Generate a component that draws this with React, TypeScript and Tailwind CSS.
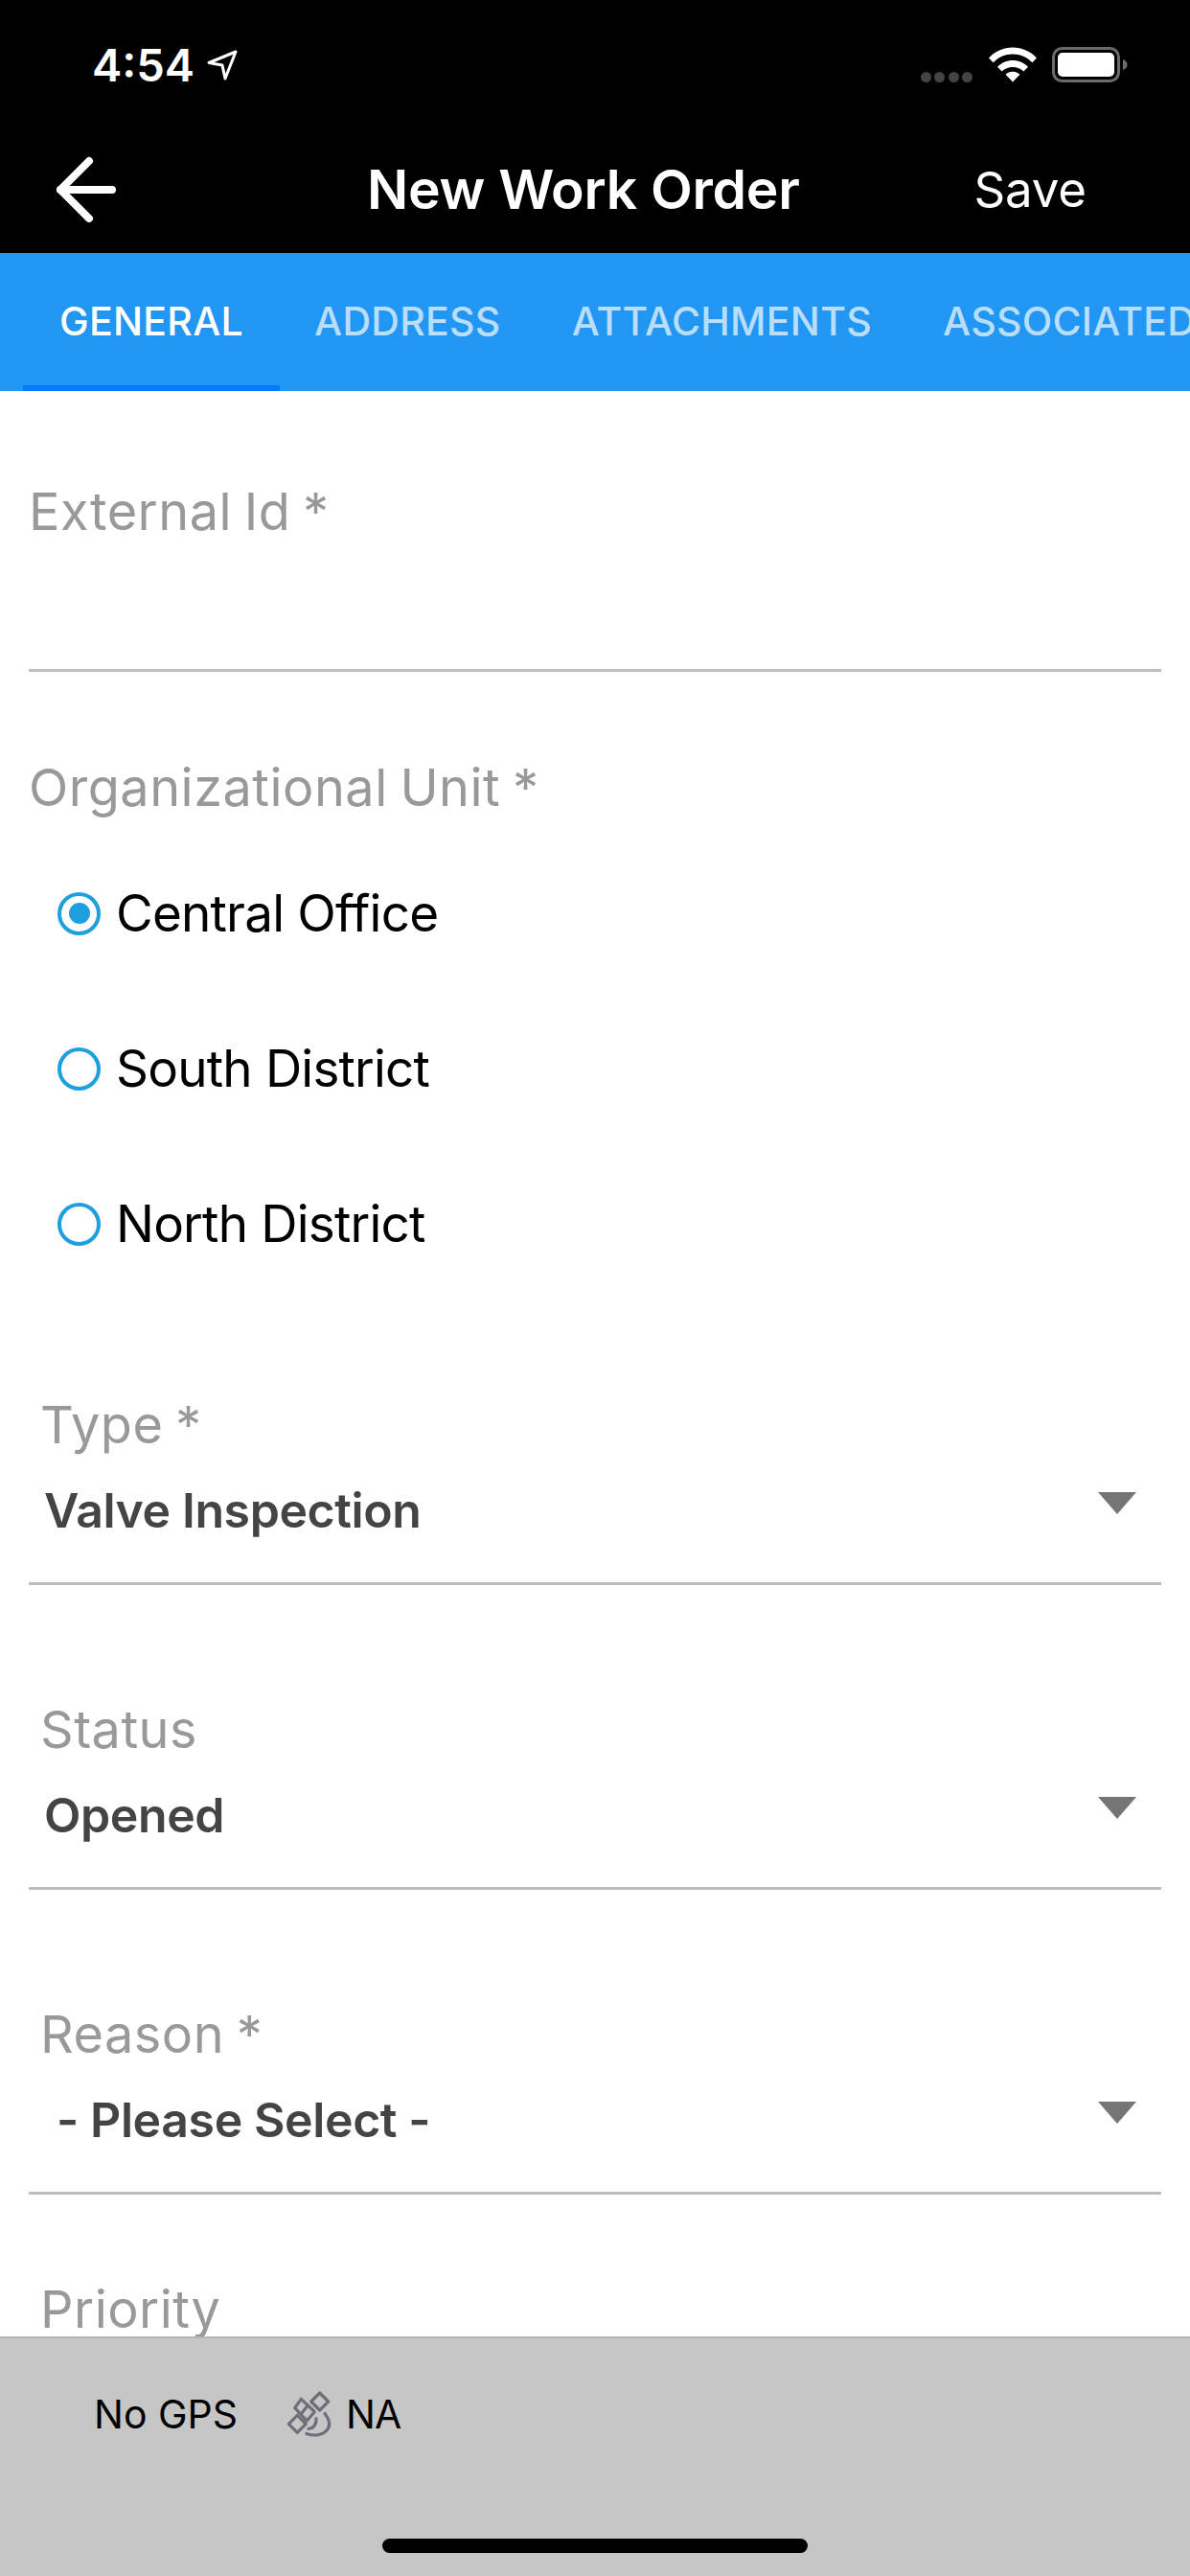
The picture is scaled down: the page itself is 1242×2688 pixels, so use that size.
import React from "react";

const sans = "font-['Inter','Noto_Sans',sans-serif]";
const labelText = "text-[54px] leading-[72px] tracking-[0.5px] [word-spacing:-3px] text-[#999999]";

function Wifi() {
  return (
    <svg width="50" height="37" viewBox="0 0 50 37" fill="#fff">
      <path d="M0 11.5C6.5 4.5 15.2 0.5 25 0.5s18.5 4 25 11l-4.6 4.8C40 10.6 33 7.4 25 7.4S10 10.6 4.600 16.300z" />
      <path d="M9 20.800C13.200 16.400 18.800 14 25 14s11.800 2.400 16 6.800l-4.600 4.800C33.400 22.600 29.400 21 25 21s-8.400 1.600-11.400 4.600z" />
      <path d="M25 36.500l-7.500-7.700C19.500 26.800 22.100 25.800 25 25.800s5.500 1 7.500 3z" />
    </svg>
  );
}

function Battery() {
  return (
    <svg width="80" height="38" viewBox="0 0 80 38">
      <rect x="1.500" y="1.500" width="68" height="34" rx="9" fill="none" stroke="#6b6b6b" strokeWidth="3" />
      <rect x="6" y="6" width="59" height="25" rx="5" fill="#fff" />
      <path d="M74 13c3 1 4.500 3 4.500 5.500S77 23 74 24z" fill="#6b6b6b" />
    </svg>
  );
}

function Arrow() {
  return (
    <svg width="62" height="70" viewBox="0 0 62 70" fill="none" stroke="#fff" strokeWidth="8" strokeLinecap="round" strokeLinejoin="round">
      <path d="M4 35H58" />
      <path d="M34 5L4 35L34 65" />
    </svg>
  );
}

function Satellite() {
  return (
    <svg width="64" height="60" viewBox="0 0 64 60" fill="none" stroke="#6f6f7b" strokeWidth="3.200" strokeLinejoin="round" strokeLinecap="round">
      <path d="M42.700 7L51.700 16L42.700 25L33.700 16z" />
      <path d="M23.300 13.300L37.300 26.700L29.300 36L16.700 22.700z" />
      <path d="M30.300 20L23 29.300" />
      <path d="M19.300 30.300L28.300 39.300L19.300 48.300L10.300 39.300z" />
      <path d="M39 33.500C39.500 40 36 44 31 44.300" />
      <path d="M48 28.500C53 35 54.500 42 49 47C44 51.500 36 52 29 49.500" />
    </svg>
  );
}

function Radio({ label, checked }: { label: string; checked?: boolean }) {
  return (
    <div className="flex h-[162px] items-center pl-[30px]">
      <span className="flex h-[45px] w-[45px] items-center justify-center rounded-full border-[4.5px] border-[#1fa0de]">
        {checked && <span className="h-[22px] w-[22px] rounded-full bg-[#1fa0de]" />}
      </span>
      <span className="ml-[16px] text-[53px] leading-[72px] tracking-[-0.8px] text-black">{label}</span>
    </div>
  );
}

function SelectField({ label, value, inset, last }: { label: string; value: string; inset?: boolean; last?: boolean }) {
  return (
    <div className={`${last ? "mb-[84px]" : "mb-[115px]"} border-b-[3px] border-[#bdbdbd]`}>
      <div className={`pl-[12px] ${labelText}`}>{label}</div>
      <div className="mt-[17px] flex items-start justify-between pb-[39px] pr-[26px] pl-[16px]">
        <span className={`${inset ? "pl-[13px]" : ""} text-[50px] font-semibold leading-[72px] tracking-[-0.4px] text-[#444444]`}>{value}</span>
        <svg className="mt-[17px]" width="40" height="23" viewBox="0 0 40 23" fill="#757575">
          <path d="M0 0h40L20 23z" />
        </svg>
      </div>
    </div>
  );
}

export default function App() {
  return (
    <div className={`${sans} flex h-[2688px] w-[1242px] flex-col overflow-hidden bg-white`}>
      <header className="h-[264px] shrink-0 bg-black text-white">
        <div className="flex h-[134px] items-start justify-between pt-[49px] pr-[64px] pl-[96px]">
          <div className="flex items-center gap-[13px]">
            <span className="text-[47px] font-semibold leading-[37px]">4:54</span>
            <svg width="32" height="32" viewBox="0 0 32 32" fill="none" stroke="#fff" strokeWidth="3" strokeLinejoin="round">
              <path d="M30 2L2 13.500L16 16L19 30z" />
            </svg>
          </div>
          <div className="flex items-start">
            <div className="mt-[26px] flex gap-[3.500px]">
              <span className="h-[11px] w-[11px] rounded-full bg-[#444444]" />
              <span className="h-[11px] w-[11px] rounded-full bg-[#444444]" />
              <span className="h-[11px] w-[11px] rounded-full bg-[#444444]" />
              <span className="h-[11px] w-[11px] rounded-full bg-[#444444]" />
            </div>
            <span className="ml-[17px]"><Wifi /></span>
            <span className="ml-[16px]"><Battery /></span>
          </div>
        </div>
        <div className="flex h-[130px] items-center pb-[2px] pl-[59px]">
          <Arrow />
          <div className="ml-[262px] text-[57px] font-semibold leading-[60px] tracking-[-0.3px]">New Work Order</div>
          <div className="ml-[182px] text-[51px] leading-[60px] tracking-[-0.2px]">Save</div>
        </div>
      </header>

      <nav className="flex h-[144px] shrink-0 overflow-hidden bg-[#2196f3] pl-[24px] text-[41px] font-medium tracking-[0.3px] text-white/70">
        <div className="flex h-full shrink-0 items-center border-b-[6px] border-[#007aff] px-[38px] pt-[6px] text-white">GENERAL</div>
        <div className="flex h-full shrink-0 items-center pr-[37px] pl-[36px]">ADDRESS</div>
        <div className="flex h-full shrink-0 items-center px-[37px]">ATTACHMENTS</div>
        <div className="flex h-full shrink-0 items-center px-[37px]">ASSOCIATED</div>
      </nav>

      <main className="min-h-0 flex-1 overflow-hidden px-[30px]">
        <div className={`mt-[90px] border-b-[3px] border-[#bdbdbd] pb-[128px] ${labelText}`}>External Id *</div>
        <div className={`mt-[85px] ${labelText}`}>Organizational Unit *</div>
        <div className="mt-[14px] mb-[93px]">
          <Radio label="Central Office" checked />
          <Radio label="South District" />
          <Radio label="North District" />
        </div>
        <SelectField label="Type *" value="Valve Inspection" />
        <SelectField label="Status" value="Opened" />
        <SelectField label="Reason *" value="- Please Select -" inset last />
        <div className={`pl-[12px] ${labelText}`}>Priority</div>
      </main>

      <footer className="h-[250px] shrink-0 border-t-[2px] border-[#b5b5b5] bg-[#c6c6c6]">
        <div className="flex h-[160px] items-center pl-[98px] text-[41px] text-black">
          <span>No GPS</span>
          <span className="ml-[43px]"><Satellite /></span>
          <span className="ml-[6px] tracking-[-1px]">NA</span>
        </div>
        <div className="mx-auto mt-[49px] h-[15px] w-[444px] rounded-full bg-black" />
      </footer>
    </div>
  );
}
